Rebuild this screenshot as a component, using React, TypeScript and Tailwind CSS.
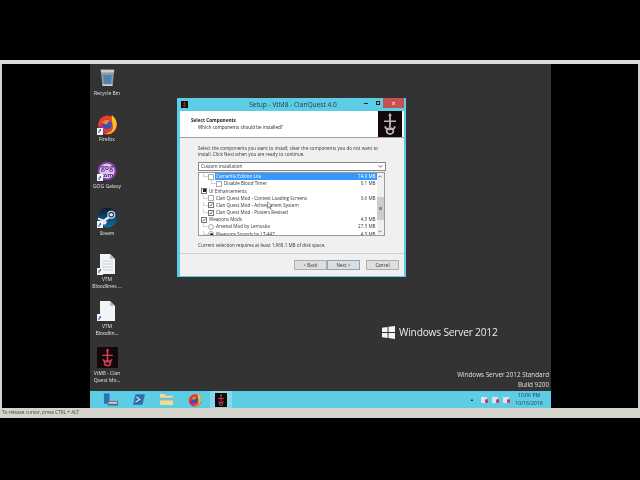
import React from "react";

const sans = "font-['Open_Sans','Liberation_Sans',sans-serif]";

function Shortcut() {
  return (
    <span className="absolute left-0 bottom-0 flex h-[7px] w-[6px] items-center justify-center bg-[#f4f6f8]">
      <svg viewBox="0 0 6 6" className="h-[6px] w-[6px]">
        <path d="M1.5 5V3L3 2H2l2-1.2V3H3.4L2.5 3.5V5z" fill="#1f5fa8" />
      </svg>
    </span>
  );
}

function Recycle() {
  return (
    <svg viewBox="0 0 20 24" className="h-[21px] w-[17px]">
      <path d="M2 3h16l-2 19H4z" fill="#8a9aa6" />
      <path d="M2 3h16l-.5 3h-15z" fill="#c9ced2" />
      <path d="M5 9h10l-1 11H6z" fill="#5f7f9e" />
      <path d="M7 13l5-2 1 6-5 2z" fill="#3f86c8" />
      <path d="M4 20h12l-.4 2H4.4z" fill="#c5cbd0" />
    </svg>
  );
}

function Firefox({ size = 21 }: { size?: number }) {
  return (
    <svg viewBox="0 0 20 20" style={{ width: size, height: size }}>
      <circle cx="10" cy="10.5" r="9" fill="#e8412a" />
      <path d="M14 1c4 3 6 8 4 12-2 5-7 7-11 5 6 1 9-3 8-7-.4-3-1-6-1-10z" fill="#f7c02c" />
      <circle cx="9.5" cy="10" r="4.6" fill="#3b4fc0" />
      <path d="M5 8c2-3 6-3 8-1-2 0-3 1-3 2 0 1-3 1-5-1z" fill="#f58a1f" />
      <path d="M2 11c0 5 5 8 9 7-3-1-6-3-6-7z" fill="#c81e55" />
    </svg>
  );
}

function Gog() {
  return (
    <svg viewBox="0 0 20 20" className="h-[20px] w-[20px]">
      <circle cx="10" cy="10" r="9.5" fill="#7f3fa6" />
      <circle cx="10" cy="10" r="7.6" fill="#d9c6e6" />
      <text x="10" y="9" textAnchor="middle" fontSize="7" fontWeight="700" fill="#6a2c90">gog</text>
      <text x="10" y="15.5" textAnchor="middle" fontSize="6" fontWeight="700" fill="#6a2c90">com</text>
    </svg>
  );
}

function Steam() {
  return (
    <svg viewBox="0 0 22 22" className="h-[21px] w-[21px]">
      <defs>
        <linearGradient id="st" x1="0" y1="0" x2="0" y2="1">
          <stop offset="0" stopColor="#0e1c33" />
          <stop offset="1" stopColor="#0f6ea8" />
        </linearGradient>
      </defs>
      <circle cx="11" cy="11" r="10.5" fill="url(#st)" />
      <circle cx="15" cy="8" r="3.6" fill="none" stroke="#e6e9ec" strokeWidth="1.2" />
      <circle cx="15" cy="8" r="1.8" fill="#e6e9ec" />
      <path d="M1 13l6 2.6 6-3.6-2-2-4 3-6-2z" fill="#e6e9ec" />
      <circle cx="7.5" cy="16" r="2.6" fill="#e6e9ec" />
    </svg>
  );
}

function Doc({ lines }: { lines?: boolean }) {
  return (
    <svg viewBox="0 0 15 20" className="h-[20px] w-[15px]">
      <path d="M0 0h10l5 5v15H0z" fill="#f3f4f7" />
      <path d="M10 0l5 5h-5z" fill="#b9bec6" />
      {lines && <path d="M2 7h11M2 10h11M2 13h11M2 16h11" stroke="#c8ccd6" strokeWidth="1" />}
    </svg>
  );
}

function Ankh({ stroke = "#d8404f", className = "" }: { stroke?: string; className?: string }) {
  return (
    <svg viewBox="0 0 20 24" className={className} preserveAspectRatio="none">
      <rect width="20" height="24" fill="#120709" />
      <g fill="none" stroke={stroke} strokeWidth="1.5">
        <path d="M10 3v12M5 9.5h10" />
        <path d="M6 14c0 2 1 3 4 3s4-1 4-3" />
        <circle cx="10" cy="18.5" r="2.8" />
      </g>
      <path d="M8.4 4.5L10 1.5l1.6 3z" fill={stroke} />
    </svg>
  );
}

function DeskIcon({ label, children, shortcut }: { label: React.ReactNode; children: React.ReactNode; shortcut?: boolean }) {
  return (
    <div className="flex h-[46.7px] w-[34px] shrink-0 flex-col items-center">
      <div className="relative flex h-[21px] w-[21px] items-center justify-center">
        {children}
        {shortcut && <Shortcut />}
      </div>
      <div className="mt-[1.5px] whitespace-nowrap text-center text-[5px] leading-[7px] text-[#e4e4e4]">{label}</div>
    </div>
  );
}

function CheckBox({ state }: { state: "off" | "on" | "mixed" }) {
  return (
    <span className={`flex h-[6px] w-[6px] shrink-0 items-center justify-center border-[0.5px] bg-white ${state === "off" ? "border-[#aaa]" : "border-[#777]"}`}>
      {state === "on" && (
        <svg viewBox="0 0 6 6" className="h-[6px] w-[6px]">
          <path d="M1 3l1.5 1.6L5 1" fill="none" stroke="#222" strokeWidth="1" />
        </svg>
      )}
      {state === "mixed" && <span className="h-[3px] w-[3px] bg-[#222]" />}
    </span>
  );
}

function Radio({ on }: { on?: boolean }) {
  return (
    <span className="flex h-[6px] w-[6px] shrink-0 items-center justify-center rounded-full border-[0.5px] border-[#aaa] bg-white">
      {on && <span className="h-[3px] w-[3px] rounded-full bg-[#222]" />}
    </span>
  );
}

function Row({ level, mark, label, size, selected }: { level: 0 | 1 | 2; mark: React.ReactNode; label: string; size?: string; selected?: boolean }) {
  return (
    <div className={`flex h-[7.2px] items-center text-[4.6px] ${level === 0 ? "pl-[2px]" : level === 1 ? "pl-[4px]" : "pl-[12px]"}`}>
      {level > 0 && <span className="mb-[3px] h-[4px] w-[5px] shrink-0 border-b-[0.5px] border-l-[0.5px] border-[#d4d4d4]" />}
      <span className="mr-[1px]">{mark}</span>
      <span className={`flex h-[7.2px] flex-1 items-center justify-between pl-[1px] pr-[1px] ${selected ? "bg-[#3399ff] text-white" : "text-[#333]"}`}>
        <span className="whitespace-nowrap">{label}</span>
        <span className="whitespace-nowrap">{size}</span>
      </span>
    </div>
  );
}

function Btn({ label, hot }: { label: string; hot?: boolean }) {
  return (
    <div className={`flex h-[9.5px] w-[33px] items-center justify-center border-[0.5px] bg-[#dedede] text-[4.6px] text-[#333] ${hot ? "border-[#7fa8c4]" : "border-[#adadad]"}`}>
      {label}
    </div>
  );
}

function Dialog() {
  return (
    <div className="absolute left-[87px] top-[34px] flex h-[179px] w-[229px] flex-col bg-[#5ccde4] pb-[1px] pl-[3px] pr-[2px]">
      <div className="relative flex h-[13px] shrink-0 items-center justify-center text-[6.6px] text-[#2a3a44]">
        <Ankh className="absolute left-[1px] top-[3px] h-[7px] w-[7px]" />
        <span className="pl-[2px]">Setup - VtM8 - ClanQuest 4.0</span>
        <div className="absolute right-0 top-0 flex h-[10px]">
          <span className="flex w-[12px] items-center justify-center"><span className="h-[1px] w-[4px] bg-[#222]" /></span>
          <span className="flex w-[11px] items-center justify-center"><span className="h-[4px] w-[4px] border-[0.5px] border-[#222]" /></span>
          <span className="flex w-[21px] items-center justify-center bg-[#c75050] text-[7px] leading-none text-white">×</span>
        </div>
      </div>
      <div className="flex min-h-0 flex-1 flex-col bg-[#f0f0f0]">
        <div className="flex h-[27px] shrink-0 items-center justify-between border-b-[0.5px] border-[#a0a0a0] bg-white pl-[11px]">
          <div className="text-[#222]">
            <div className="text-[4.7px] font-bold leading-[7.5px]">Select Components</div>
            <div className="pl-[7px] text-[4.6px] leading-[7.5px]">Which components should be installed?</div>
          </div>
          <Ankh stroke="#b8b8b8" className="mr-[2px] h-[26px] w-[24px]" />
        </div>
        <div className="flex flex-1 flex-col pl-[18px] pr-[18px] pt-[7px] text-[#333]">
          <div className="whitespace-nowrap text-[4.6px] leading-[6px]">Select the components you want to install; clear the components you do not want to</div>
          <div className="whitespace-nowrap text-[4.6px] leading-[6px]">install. Click Next when you are ready to continue.</div>
          <div className="mt-[5px] flex h-[9px] items-center justify-between border-[0.5px] border-[#888] bg-white px-[2px] text-[4.6px]">
            <span>Custom installation</span>
            <svg viewBox="0 0 6 4" className="h-[3px] w-[5px]"><path d="M0.5 0.5L3 3 5.5 0.5" fill="none" stroke="#333" strokeWidth="1" /></svg>
          </div>
          <div className="mr-[1.5px] mt-[1px] flex h-[64px] shrink-0 overflow-hidden border-[0.5px] border-[#999] bg-white">
            <div className="min-w-0 flex-1">
              <Row level={1} mark={<CheckBox state="off" />} label="Camarilla Edition Lite" size="74.9 MB" selected />
              <Row level={2} mark={<CheckBox state="off" />} label="Disable Blood Timer" size="0.1 MB" />
              <Row level={0} mark={<CheckBox state="mixed" />} label="UI Enhancements" />
              <Row level={1} mark={<CheckBox state="off" />} label="Clan Quest Mod - Context Loading Screens" size="0.6 MB" />
              <Row level={1} mark={<CheckBox state="on" />} label="Clan Quest Mod - Achievement System" />
              <Row level={1} mark={<CheckBox state="on" />} label="Clan Quest Mod - Posters Revised" />
              <Row level={0} mark={<CheckBox state="on" />} label="Weapons Mods" size="4.3 MB" />
              <Row level={1} mark={<Radio />} label="Arsenal Mod by Lemuska" size="27.3 MB" />
              <Row level={1} mark={<Radio on />} label="Weapons Sounds by LT-447" size="4.3 MB" />
            </div>
            <div className="flex w-[7px] shrink-0 flex-col items-center justify-between bg-[#f0f0f0] py-[2px]">
              <svg viewBox="0 0 6 4" className="h-[3px] w-[4px]"><path d="M0.5 3.5L3 1 5.5 3.5" fill="none" stroke="#555" /></svg>
              <span className="mt-[9px] flex h-[23px] w-[7px] items-center justify-center bg-[#cdcdcd]">
                <span className="h-[3px] w-[3px] bg-[#8a8a8a]" />
              </span>
              <svg viewBox="0 0 6 4" className="h-[3px] w-[4px]"><path d="M0.5 0.5L3 3 5.5 0.5" fill="none" stroke="#555" /></svg>
            </div>
          </div>
          <div className="mt-[6px] whitespace-nowrap text-[4.6px] leading-[6px]">Current selection requires at least 1,968.1 MB of disk space.</div>
        </div>
        <div className="flex h-[23px] shrink-0 items-center justify-end border-t-[0.5px] border-[#cfcfcf] pr-[5px]">
          <Btn label="< Back" />
          <Btn label="Next >" hot />
          <span className="w-[6px]" />
          <Btn label="Cancel" />
        </div>
      </div>
    </div>
  );
}

function TrayDot() {
  return (
    <span className="relative block h-[6px] w-[6px] bg-[#d8e6ec]">
      <span className="absolute bottom-0 right-[-1px] h-[3.5px] w-[3.5px] rounded-full bg-[#d03050]" />
    </span>
  );
}

export default function App() {
  return (
    <div className={`flex h-[480px] w-[640px] flex-col overflow-hidden bg-black blur-[0.35px] ${sans}`}>
      <div className="h-[60px] shrink-0" />
      <div className="flex h-[358px] w-[640px] shrink-0 flex-col bg-[#d4d4cc]">
        <div className="h-[4px] shrink-0 bg-[#dcdcd6]" />
        <div className="mx-[2px] flex h-[344px] bg-black">
          <div className="w-[88px] shrink-0" />
          <div className="relative flex h-[344px] w-[461px] shrink-0 flex-col bg-[#333333]">
            <div className="flex min-h-0 flex-1 flex-col pt-[3px]">
              <DeskIcon label="Recycle Bin"><Recycle /></DeskIcon>
              <DeskIcon label="Firefox" shortcut><Firefox /></DeskIcon>
              <DeskIcon label="GOG Galaxy" shortcut><Gog /></DeskIcon>
              <DeskIcon label="Steam" shortcut><Steam /></DeskIcon>
              <DeskIcon label={<>VTM<br />Bloodlines ...</>} shortcut><Doc lines /></DeskIcon>
              <DeskIcon label={<>VTM<br />Bloodlin...</>} shortcut><Doc /></DeskIcon>
              <DeskIcon label={<>VtM8 - Clan<br />Quest Mo...</>}><Ankh className="h-[21px] w-[21px]" /></DeskIcon>
            </div>

            <Dialog />

            <div className="pointer-events-none absolute left-[177px] top-[137px]">
              <svg viewBox="0 0 6 10" className="h-[9px] w-[5px]">
                <path d="M0.5 0.5v8l2-2 1.5 3 1-.5-1.5-3h2.5z" fill="#fff" stroke="#333" strokeWidth="0.6" />
              </svg>
            </div>

            <div className="absolute left-[292px] top-[262px] flex items-center text-[#ececec]">
              <svg viewBox="0 0 14 14" className="h-[13px] w-[13px]">
                <path d="M0 2l6-1v5.5H0zM7 .8L14 0v6.5H7zM0 7.5h6V13l-6-1zM7 7.5h7V14l-7-1z" fill="#f4f4f4" />
              </svg>
              <span className="ml-[4px] text-[10.2px] leading-[13px] tracking-[-0.2px]">Windows Server 2012</span>
            </div>
            <div className="absolute right-[2px] top-[306px] text-right text-[6.3px] leading-[10px] text-[#e0e0e0]">
              <div>Windows Server 2012 Standard</div>
              <div>Build 9200</div>
            </div>

            <div className="flex h-[17px] shrink-0 items-center bg-[#5ccde4]">
              <div className="w-[7px]" />
              <div className="flex h-[17px] w-[27px] items-center justify-center">
                <svg viewBox="0 0 16 14" className="h-[14px] w-[15px]">
                  <rect x="1" y="0" width="6" height="11" fill="#2a6fb8" />
                  <rect x="5" y="8" width="11" height="5" fill="#5d6a78" />
                  <rect x="6" y="9" width="9" height="2" fill="#c8d0d8" />
                </svg>
              </div>
              <div className="flex h-[17px] w-[29px] items-center justify-center">
                <svg viewBox="0 0 14 12" className="h-[11px] w-[12px]">
                  <path d="M3 0h11l-3 12H0z" fill="#2f6da8" />
                  <path d="M4 3l4 3-5 3" fill="none" stroke="#e8f0f8" strokeWidth="1.2" />
                </svg>
              </div>
              <div className="flex h-[17px] w-[27px] items-center justify-center">
                <svg viewBox="0 0 16 14" className="h-[13px] w-[15px]">
                  <path d="M1 1h5l1 2h8v10H1z" fill="#f3dc8c" />
                  <rect x="1" y="5" width="14" height="3" fill="#7fb8d8" />
                </svg>
              </div>
              <div className="flex h-[17px] w-[30px] items-center justify-center"><Firefox size={14} /></div>
              <div className="flex h-[17px] w-[22px] items-center justify-center bg-[#86d8ea]">
                <Ankh className="h-[14px] w-[12px]" />
              </div>
              <div className="flex-1" />
              <div className="flex items-center gap-[5px] pr-[2px]">
                <span className="mr-[2px] text-[4px] leading-none text-[#222]">▲</span>
                <TrayDot />
                <TrayDot />
                <TrayDot />
              </div>
              <div className="mr-[4px] w-[36px] text-center text-[5.2px] leading-[7.5px] text-[#2a3a44]">
                <div>10:06 PM</div>
                <div>10/16/2018</div>
              </div>
            </div>
          </div>
          <div className="flex-1" />
        </div>
        <div className="flex h-[10px] shrink-0 items-center pl-[2px] text-[4.7px] text-[#444]">To release cursor, press CTRL + ALT</div>
      </div>
    </div>
  );
}
